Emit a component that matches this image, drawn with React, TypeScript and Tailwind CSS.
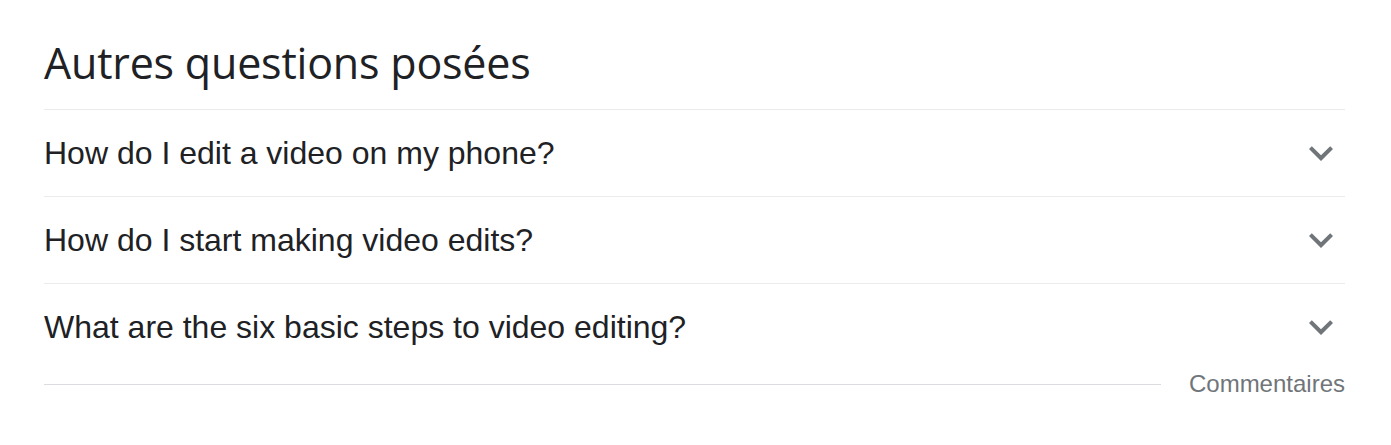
import React from 'react';

const questions = [
  'How do I edit a video on my phone?',
  'How do I start making video edits?',
  'What are the six basic steps to video editing?',
];

function Chevron() {
  return (
    <svg viewBox="0 0 24 24" className="h-[48px] w-[48px] shrink-0 fill-[#70757a]">
      <path d="M7.41 8.59L12 13.17l4.59-4.58L18 10l-6 6-6-6 1.41-1.41z" />
    </svg>
  );
}

export default function App() {
  return (
    <div className="min-h-[445px] w-full bg-white px-[44px] pr-[46px] pt-[37px] font-['Liberation_Sans',Arial,sans-serif] text-[#202124]">
      <h2 className="h-[73px] border-b border-[#ebebeb] font-['Open_Sans','Roboto',sans-serif] text-[43px] leading-[52px] font-normal tracking-[-0.2px]">
        Autres questions posées
      </h2>
      {questions.map((q, i) => (
        <div
          key={q}
          className={
            i < questions.length - 1
              ? 'flex h-[87px] items-center justify-between border-b border-[#ebebeb]'
              : 'flex h-[86px] items-center justify-between'
          }
        >
          <span className="text-[32px] leading-[40px]">{q}</span>
          <Chevron />
        </div>
      ))}
      <div className="flex h-[28px] items-center">
        <div className="h-px flex-1 bg-[#dadce0]" />
        <span className="ml-[28px] text-[24px] leading-[28px] text-[#70757a]">Commentaires</span>
      </div>
    </div>
  );
}
